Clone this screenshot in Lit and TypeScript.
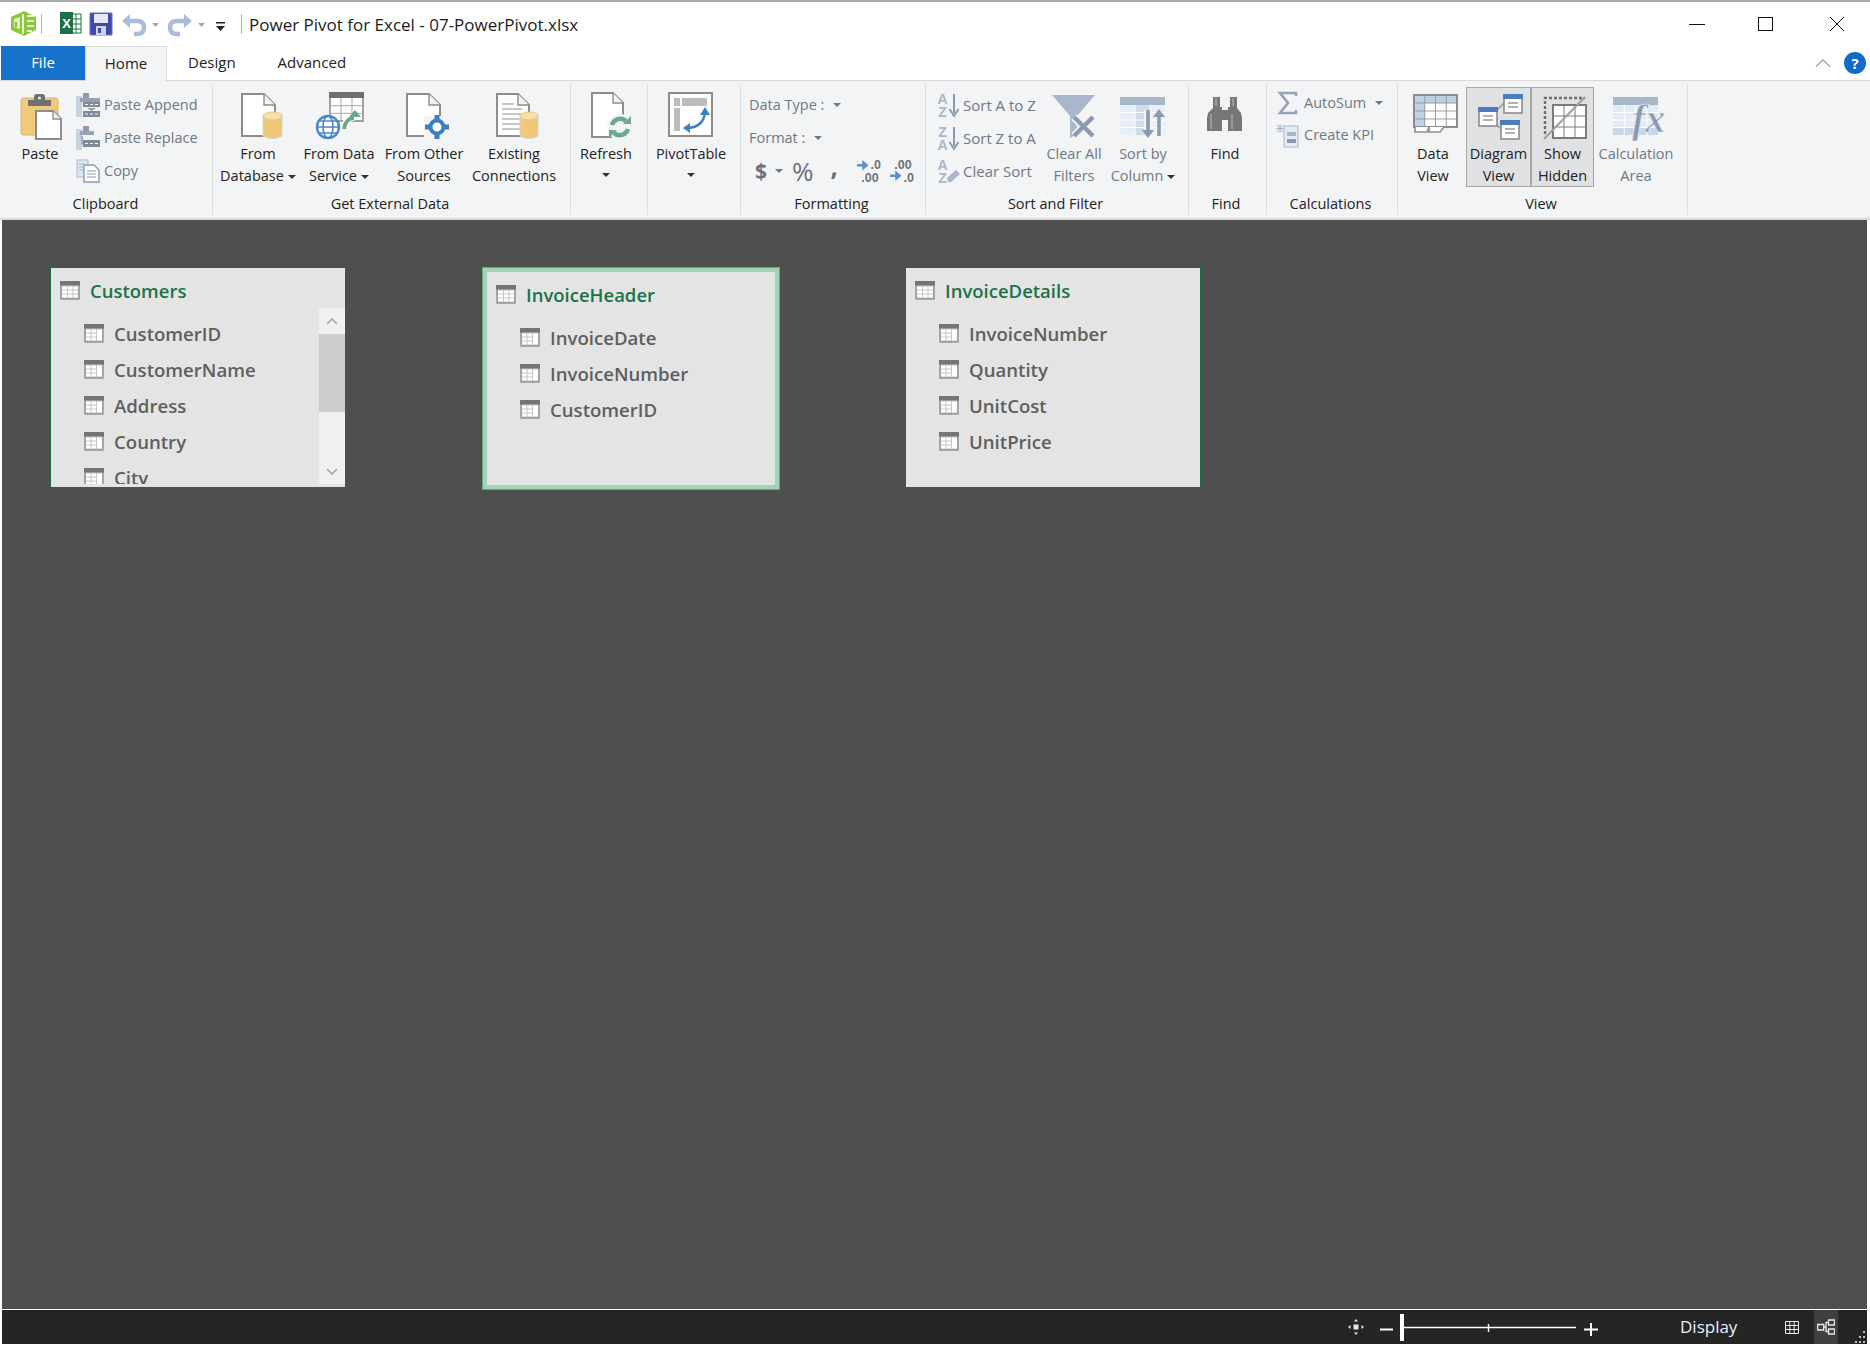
import { LitElement, html, css, svg } from "lit";
import { customElement } from "lit/decorators.js";

const GRAY = "#8d8d8d";
const SOFT = "#a9b7cb";
const SOFT_DARK = "#8b9ab2";

const caret = () => html`<i class="caret"></i>`;
const soloCaret = () => html`<i class="caret solo"></i>`;

// page with a folded corner, the base of most of the big buttons
const doc = (x: number, y: number, w: number, h: number, f = 10) => svg`
  <path d=${`M${x} ${y}H${x + w - f}L${x + w} ${y + f}V${y + h}H${x}Z`} fill="#fff" stroke=${GRAY} stroke-width="2"/>
  <path d=${`M${x + w - f} ${y}V${y + f}H${x + w}`} fill="#f3f3f3" stroke=${GRAY} stroke-width="1.4"/>`;

const cyl = (x: number, y: number, w: number, h: number) => svg`
  <path d=${`M${x} ${y + 3}V${y + h - 3}Q${x + w / 2} ${y + h + 2} ${x + w} ${y + h - 3}V${y + 3}Z`} fill="#efc878" stroke="#d3d3d3"/>
  <ellipse cx=${x + w / 2} cy=${y + 4} rx=${w / 2} ry="4" fill="#f6dfa9" stroke="#e9c77f"/>`;

const grid = (x: number, y: number, w: number, h: number, cols: number, rows: number, line: string) => {
  const out = [];
  for (let i = 1; i < cols; i++) out.push(svg`<path d=${`M${x + (w * i) / cols} ${y}v${h}`} stroke=${line} fill="none"/>`);
  for (let i = 1; i < rows; i++) out.push(svg`<path d=${`M${x} ${y + (h * i) / rows}h${w}`} stroke=${line} fill="none"/>`);
  return out;
};

const big = (body: unknown) => html`<svg class="big" viewBox="0 0 48 52">${body}</svg>`;

const icons: Record<string, unknown> = {
  paste: big(svg`
    <rect x="5" y="8" width="37" height="37" rx="2" fill="#f0c97c" stroke="#ddb668"/>
    <path d="M12 16V10h6V7q0-3 3-3h5q3 0 3 3v3h6v6z" fill="#707070"/>
    <circle cx="23.5" cy="8" r="1.6" fill="#e8e8e8"/>
    ${doc(20, 21, 25, 28, 8)}`),
  database: big(svg`${doc(8, 4, 33, 42, 11)}${cyl(29, 22, 19, 27)}`),
  service: big(svg`
    <rect x="15" y="3" width="33" height="28" fill="#fff" stroke=${GRAY} stroke-width="1.6"/>
    <rect x="14" y="2" width="35" height="6" fill="#6f6f6f"/>
    ${grid(15, 8, 33, 23, 3, 3, "#a6a6a6")}
    <path d="M30 37c1-7 5-10 10-10" fill="none" stroke="#fff" stroke-width="7"/>
    <path d="M29 39c1-7 5-11 10-11" fill="none" stroke="#6aa88c" stroke-width="4"/>
    <path d="M34 27l6-7 6 7z" fill="#6aa88c"/>
    <circle cx="13" cy="37" r="11" fill="#fff" stroke="#4c86c4" stroke-width="2.4"/>
    <ellipse cx="13" cy="37" rx="5" ry="11" fill="none" stroke="#4c86c4" stroke-width="1.6"/>
    <path d="M2 37h22M4 31h18M4 43h18" stroke="#4c86c4" stroke-width="1.6"/>`),
  other: big(svg`
    ${doc(7, 4, 33, 42, 11)}
    <rect x="24" y="26" width="24" height="22" fill="#f3f4f6"/>
    <path d="M37 25v24M25 37h24" stroke="#3f7fc0" stroke-width="5"/>
    <circle cx="37" cy="37" r="6.5" fill="#fff" stroke="#3f7fc0" stroke-width="4"/>`),
  existing: big(svg`
    ${doc(7, 4, 32, 42, 11)}
    <path d="M12 14h12M12 19h20M12 24h20M12 29h20M12 34h20M12 39h20" stroke="#b5b5b5" stroke-width="1.6"/>
    ${cyl(30, 22, 18, 27)}`),
  refresh: html`<svg class="big wide" viewBox="0 0 56 52">
    ${doc(14, 3, 31, 44, 10)}
    <circle cx="42" cy="37" r="13" fill="#f3f4f6"/>
    <path d="M34 35a8.5 8.5 0 0 1 14-4" fill="none" stroke="#6aa98c" stroke-width="4.5"/>
    <path d="M50 39a8.5 8.5 0 0 1-14 4" fill="none" stroke="#6aa98c" stroke-width="4.5"/>
    <path d="M45 34h8v-8zM39 40h-8v8z" fill="#6aa98c"/>
  </svg>`,
  pivot: big(svg`
    <rect x="2" y="3" width="43" height="43" fill="#fff" stroke=${GRAY} stroke-width="2"/>
    <rect x="7" y="8" width="6" height="8" fill="#bcbcbc"/>
    <rect x="15" y="8" width="25" height="8" fill="#bcbcbc"/>
    <rect x="7" y="18" width="6" height="23" fill="#bcbcbc"/>
    <path d="M21 38q15-1 17-15" fill="none" stroke="#3f7fbd" stroke-width="2.4"/>
    <path d="M16 38l7-5v10zM38 17l5 8H33z" fill="#3f7fbd"/>`),
  clearFilters: big(svg`
    <path d="M2 5H45L27 26V44L20 48V26Z" fill=${SOFT}/>
    <path d="M24 27L43 46M43 27L24 46" stroke="#f3f4f6" stroke-width="8"/>
    <path d="M24 27L43 46M43 27L24 46" stroke=${SOFT_DARK} stroke-width="4.4"/>`),
  sortColumn: big(svg`
    <rect x="1" y="7" width="45" height="38" fill="#e8eef6"/>
    <rect x="1" y="7" width="45" height="8" fill=${SOFT}/>
    <rect x="16" y="15" width="15" height="30" fill="#d2dbe7"/>
    ${grid(1, 15, 45, 30, 3, 4, "#fff")}
    <path d="M29 20v22M40 46V24" stroke="#f3f4f6" stroke-width="8"/>
    <path d="M29 20v24M40 46V24" stroke=${SOFT_DARK} stroke-width="3.6"/>
    <path d="M23 40h12l-6 8zM34 27h12l-6-8z" fill=${SOFT_DARK}/>`),
  find: big(svg`
    <path d="M12 7h7v10h2v3h6v-3h2V7h7v11l4 5 1 5v13H27V30h-6v11H6V28l1-5 5-5z" fill="#777"/>
    <path d="M10 24v15M31 24v15M15 8v8M32 8v8" stroke="#a4a4a4" stroke-width="1.6"/>`),
  dataView: big(svg`
    <rect x="5" y="5" width="43" height="32" fill="#fff" stroke=${GRAY} stroke-width="2"/>
    <rect x="6" y="6" width="41" height="7" fill="#bcd0e6"/>
    <rect x="6" y="6" width="10" height="30" fill="#bcd0e6"/>
    ${grid(5, 5, 43, 32, 4, 4, "#9c9c9c")}
    <path d="M6 37v5h12l2-5M20 37v5h11l4-5" fill="#fff" stroke=${GRAY} stroke-width="1.6"/>`),
  diagramView: big(svg`
    <path d="M18 24L30 12M18 32L30 42" stroke="#9a9a9a" stroke-width="1.6"/>
    <rect x="4" y="18" width="18" height="18" fill="#fff" stroke=${GRAY} stroke-width="1.6"/>
    <rect x="3" y="17" width="20" height="5" fill="#4a7ebb"/>
    <path d="M8 26h10M8 30h10" stroke="#999" stroke-width="1.6"/>
    <rect x="29" y="5" width="18" height="18" fill="#fff" stroke=${GRAY} stroke-width="1.6"/>
    <rect x="28" y="4" width="20" height="5" fill="#4a7ebb"/>
    <path d="M33 13h10M33 17h10" stroke="#999" stroke-width="1.6"/>
    <rect x="26" y="31" width="18" height="18" fill="#fff" stroke=${GRAY} stroke-width="1.6"/>
    <rect x="25" y="30" width="20" height="5" fill="#4a7ebb"/>
    <path d="M30 39h10M30 43h10" stroke="#999" stroke-width="1.6"/>`),
  showHidden: big(svg`
    <rect x="14" y="15" width="33" height="33" fill="#fff" stroke="#7b7b7b" stroke-width="2"/>
    ${grid(14, 15, 33, 33, 3, 3, "#7b7b7b")}
    <path d="M6 44V8h40" fill="none" stroke="#6e6e6e" stroke-width="2.4" stroke-dasharray="3 2"/>
    <path d="M5 49L46 7" stroke="#a0a0a0" stroke-width="2"/>`),
  calcArea: big(svg`
    <rect x="1" y="7" width="45" height="38" fill="#e4ebf5"/>
    <rect x="1" y="7" width="45" height="8" fill=${SOFT}/>
    <rect x="1" y="38" width="45" height="7" fill="#c9d6e8"/>
    ${grid(1, 15, 45, 30, 4, 4, "#fff")}
    <text x="20" y="42" class="fx">fx</text>`),

  append: html`<svg class="small" viewBox="0 0 24 24">
    <rect x="0" y="3" width="6" height="21" fill="#c7d2e1"/>
    <rect x="7" y="0" width="6" height="5" fill="#8f9aab"/>
    <rect x="4" y="5" width="20" height="4" fill="#97a3b5"/>
    <rect x="7" y="9" width="17" height="5" fill="#7f8a9b"/>
    <path d="M11 15h9l-4.500 3z" fill="#8f9aab"/>
    <rect x="7" y="18" width="17" height="6" fill="#7f8a9b"/>
    <path d="M9 11.500h13M9 21h13" stroke="#fff" stroke-dasharray="3 2"/>
  </svg>`,
  replace: html`<svg class="small" viewBox="0 0 24 24">
    <rect x="0" y="3" width="6" height="21" fill="#c7d2e1"/>
    <rect x="7" y="0" width="6" height="5" fill="#8f9aab"/>
    <rect x="4" y="5" width="14" height="4" fill="#97a3b5"/>
    <path d="M6 10v8h3" fill="none" stroke="#97a3b5" stroke-width="1.600"/>
    <rect x="7" y="14" width="17" height="7" fill="#7f8a9b"/>
    <path d="M9 17.500h13" stroke="#fff" stroke-dasharray="3 2"/>
  </svg>`,
  copy: html`<svg class="small" viewBox="0 0 24 24">
    <rect x="1" y="1" width="11" height="17" fill="#dfe6ef" stroke=${SOFT}/>
    <path d="M8 6h10l5 5v12H8z" fill="#fff" stroke=${SOFT_DARK} stroke-width="1.400"/>
    <path d="M11 12h9M11 15h9M11 18h9" stroke=${SOFT_DARK}/>
    <path d="M3 5h6M3 8h4M3 11h4" stroke=${SOFT}/>
  </svg>`,
  sortAz: html`<svg class="small" viewBox="0 0 24 24">
    <text x="6.500" y="11" class="az">A</text><text x="6.500" y="24" class="az">Z</text>
    <path d="M18 1v19" stroke=${SOFT_DARK} stroke-width="2"/>
    <path d="M13.500 16l4.500 7 4.500-7" fill="none" stroke=${SOFT_DARK} stroke-width="2"/>
  </svg>`,
  sortZa: html`<svg class="small" viewBox="0 0 24 24">
    <text x="6.500" y="11" class="az">Z</text><text x="6.500" y="24" class="az">A</text>
    <path d="M18 1v19" stroke=${SOFT_DARK} stroke-width="2"/>
    <path d="M13.500 16l4.500 7 4.500-7" fill="none" stroke=${SOFT_DARK} stroke-width="2"/>
  </svg>`,
  clearSort: html`<svg class="small" viewBox="0 0 24 24">
    <text x="6.500" y="11" class="az">A</text><text x="6.500" y="24" class="az">Z</text>
    <path d="M11 19l9-8 4 4-9 8h-3z" fill=${SOFT}/>
  </svg>`,
  sigma: html`<svg class="small" viewBox="0 0 24 24">
    <path d="M20 5V2H4l8 10-8 10h16v-3" fill="none" stroke="#94a4bc" stroke-width="2.600"/>
  </svg>`,
  kpi: html`<svg class="small" viewBox="0 0 24 24">
    <rect x="8" y="3" width="14" height="21" fill="#e5ebf3" stroke=${SOFT}/>
    <rect x="11" y="9" width="9" height="4" fill=${SOFT}/>
    <rect x="11" y="16" width="9" height="4" fill=${SOFT_DARK}/>
    <path d="M4 1v9M0 5.500h8M1 2l6 7M7 2l-6 7" stroke=${SOFT}/>
  </svg>`,
};

const cells = (xs: number[][]) =>
  xs.map(([x, w]) => [5.5, 9.5, 13.5].map((y) => svg`<rect x=${x} y=${y} width=${w} height="3" fill="#fff"/>`));

const iconBase = svg`
  <rect x="1" y="1" width="18" height="17" fill="#c6c6c6" stroke="#8f8f8f" stroke-width="1.400"/>
  <rect x="0" y="0" width="20" height="4.500" fill="#757575"/>`;

const tableIcon = html`<svg class="ticon" viewBox="0 0 20 19">
  ${iconBase}${cells([[2, 5], [8, 4.5], [13.500, 4.5]])}
</svg>`;

const fieldIcon = html`<svg class="ticon" viewBox="0 0 20 19">
  ${iconBase}${cells([[2, 4.5], [7.500, 4.5]])}
  <rect x="13" y="5.500" width="5" height="11" fill="#fff"/>
</svg>`;

const tables = [
  { name: "Customers", x: 48, y: 47, w: 296, h: 221, fields: ["CustomerID", "CustomerName", "Address", "Country", "City"], scroll: true },
  { name: "InvoiceHeader", x: 480, y: 47, w: 298, h: 223, fields: ["InvoiceDate", "InvoiceNumber", "CustomerID"], selected: true },
  { name: "InvoiceDetails", x: 903, y: 47, w: 296, h: 221, fields: ["InvoiceNumber", "Quantity", "UnitCost", "UnitPrice"] },
];

@customElement("app-root")
export class AppRoot extends LitElement {
  private large(icon: string, lines: unknown[], width: number, off = false, active = false) {
    return html`<div class="btn ${off ? "off" : ""} ${active ? "active" : ""}" style="width:${width}px">
      ${icons[icon]}
      <div class="lbl">${lines.map((l) => html`<div>${l}</div>`)}</div>
    </div>`;
  }

  private small(icon: string, label: unknown) {
    return html`<div class="row">${icons[icon]}<span>${label}</span></div>`;
  }

  private group(name: string, cls: string, body: unknown) {
    return html`<section class="group ${cls}">
      <div class="body">${body}</div>
      <div class="glabel">${name}</div>
    </section>`;
  }

  private titlebar() {
    return html`<header class="titlebar">
      <svg class="qat" viewBox="0 2 241 42">
        <path d="M11 17l13-6 12 6v13l-12 6-13-6z" fill="#8cc63f"/>
        <path d="M23 14v20M27 16h7M27 21h7M27 26h7M27 31h5" stroke="#fff" stroke-width="1.600"/>
        <path d="M14 19l6-2v12l-6-2z" fill="#dff0c4"/>
        <path d="M16 22v5" stroke="#6fa52c" stroke-width="1.600"/>
        <rect x="41" y="14" width="1" height="20" fill="#b5b5b5"/>

        <rect x="66" y="14" width="15" height="19" fill="#fff" stroke="#1e7145"/>
        <path d="M71 14v19M76 14v19M66 19h15M66 24h15M66 29h15" stroke="#1e7145"/>
        <rect x="60" y="12" width="13" height="22" fill="#1e7145"/>
        <text x="66.500" y="28" class="xl">X</text>

        <rect x="90" y="13" width="22" height="22" rx="1" fill="#4148a8"/>
        <path d="M90 13h22v22H90z" fill="none" stroke="#6a70c6"/>
        <rect x="94" y="14" width="14" height="9" fill="#e5e8f7"/>
        <rect x="96" y="26" width="10" height="9" fill="#cfd4ef"/>
        <rect x="98" y="28" width="3" height="5" fill="#4148a8"/>

        <path d="M127 21h10q7 0 7 6.500t-7 6.500h-3" fill="none" stroke="#a9bdd6" stroke-width="4.500"/>
        <path d="M122 21l8-7v14z" fill="#a9bdd6"/>
        <path d="M152 23h7l-3.500 4z" fill="#a8a8a8"/>
        <path d="M187 21h-10q-7 0-7 6.500t7 6.500h3" fill="none" stroke="#a9bdd6" stroke-width="4.500"/>
        <path d="M192 21l-8-7v14z" fill="#a9bdd6"/>
        <path d="M198 23h7l-3.500 4z" fill="#a8a8a8"/>
        <rect x="216" y="22" width="9" height="1.500" fill="#222"/>
        <path d="M216 26h9l-4.500 5z" fill="#222"/>
      </svg>
      <i class="tsep"></i>
      <span class="title">Power Pivot for Excel - 07-PowerPivot.xlsx</span>
      <div class="winctl">
        <svg viewBox="0 0 16 16"><path d="M0 8.500h16" stroke="#111"/></svg>
        <svg class="maxi" viewBox="0 0 16 16"><rect x="0.500" y="1.500" width="14" height="13" fill="none" stroke="#111"/></svg>
        <svg viewBox="0 0 16 16"><path d="M1 1l14 14M15 1L1 15" stroke="#111"/></svg>
      </div>
    </header>`;
  }

  private tabs() {
    return html`<nav class="tabs">
      <div class="tab file">File</div>
      <div class="tab home">Home</div>
      <div class="tab design">Design</div>
      <div class="tab">Advanced</div>
      <div class="tabtools">
        <svg class="collapse" viewBox="0 0 16 8"><path d="M1 7.500l7-6.500 7 6.500" fill="none" stroke="#a8a8a8" stroke-width="1.500"/></svg>
        <div class="help">?</div>
      </div>
    </nav>`;
  }

  private ribbon() {
    return html`<div class="ribbon">
      ${this.group("Clipboard", "g-clip", html`
        ${this.large("paste", ["Paste"], 72)}
        <div class="col off">
          ${this.small("append", "Paste Append")}
          ${this.small("replace", "Paste Replace")}
          ${this.small("copy", "Copy")}
        </div>`)}
      ${this.group("Get External Data", "g-ext", html`
        ${this.large("database", ["From", html`Database${caret()}`], 80)}
        ${this.large("service", ["From Data", html`Service${caret()}`], 82)}
        ${this.large("other", ["From Other", "Sources"], 88)}
        ${this.large("existing", ["Existing", "Connections"], 92)}`)}
      ${this.group("", "g-refresh", this.large("refresh", ["Refresh", soloCaret()], 70))}
      ${this.group("", "g-pivot", this.large("pivot", ["PivotTable", soloCaret()], 86))}
      ${this.group("Formatting", "g-fmt", html`
        <div class="col off">
          <div class="row"><span>Data Type :</span><i class="caret c-type"></i></div>
          <div class="row"><span>Format :</span><i class="caret c-type"></i></div>
          <div class="row numfmt">
            <b class="dollar">$</b><i class="caret c-dollar"></i>
            <span class="pct">%</span>
            <b class="comma">,</b>
            <svg class="dec" viewBox="0 0 24 22">
              <path d="M1 6h6" stroke="#5f8fc4" stroke-width="2.400"/><path d="M6 1l6 5-6 5z" fill="#5f8fc4"/>
              <text x="14" y="10" class="dectxt">.0</text><text x="5" y="22" class="dectxt">.00</text>
            </svg>
            <svg class="dec" viewBox="0 0 24 22">
              <text x="5" y="10" class="dectxt">.00</text>
              <path d="M1 16h6" stroke="#5f8fc4" stroke-width="2.400"/><path d="M6 11l6 5-6 5z" fill="#5f8fc4"/>
              <text x="14" y="22" class="dectxt">.0</text>
            </svg>
          </div>
        </div>`)}
      ${this.group("Sort and Filter", "g-sort", html`
        <div class="col off sortcol">
          ${this.small("sortAz", "Sort A to Z")}
          ${this.small("sortZa", "Sort Z to A")}
          ${this.small("clearSort", "Clear Sort")}
        </div>
        ${this.large("clearFilters", ["Clear All", "Filters"], 64, true)}
        ${this.large("sortColumn", ["Sort by", html`Column${caret()}`], 74, true)}`)}
      ${this.group("Find", "g-find", this.large("find", ["Find"], 72))}
      ${this.group("Calculations", "g-calc", html`
        <div class="col off calccol">
          <div class="row">${icons.sigma}<span>AutoSum</span><i class="caret"></i></div>
          ${this.small("kpi", "Create KPI")}
        </div>`)}
      ${this.group("View", "g-view", html`
        ${this.large("dataView", ["Data", "View"], 66)}
        ${this.large("diagramView", ["Diagram", "View"], 65, false, true)}
        ${this.large("showHidden", ["Show", "Hidden"], 63, false, true)}
        ${this.large("calcArea", ["Calculation", "Area"], 84, true)}`)}
    </div>`;
  }

  private canvas() {
    return html`<main class="canvas">
      ${tables.map((t) => html`
        <article class="card ${t.selected ? "selected" : ""}" style="left:${t.x}px;top:${t.y}px;width:${t.w}px;height:${t.h}px">
          <div class="chead">${tableIcon}<span>${t.name}</span></div>
          <div class="fields">
            ${t.fields.map((f) => html`<div class="field">${fieldIcon}<span>${f}</span></div>`)}
          </div>
          ${t.scroll
            ? html`<div class="scroll">
                <div class="sbtn"><svg viewBox="0 0 12 7"><path d="M1 6l5-5 5 5" fill="none" stroke="#a6a6a6" stroke-width="1.600"/></svg></div>
                <div class="thumb"></div>
                <div class="track"></div>
                <div class="sbtn"><svg viewBox="0 0 12 7"><path d="M1 1l5 5 5-5" fill="none" stroke="#a6a6a6" stroke-width="1.600"/></svg></div>
              </div>`
            : null}
        </article>`)}
    </main>`;
  }

  private statusbar() {
    return html`<footer class="status">
      <svg class="fit" viewBox="0 0 16 16" fill="#e8e8e8">
        <rect x="5.500" y="5.500" width="5" height="5"/>
        <path d="M8 0l2 2.500H6zM8 16l2-2.500H6zM0 8l2.500-2v4zM16 8l-2.500-2v4z"/>
      </svg>
      <svg class="slider" viewBox="0 0 220 30">
        <path d="M0 17.500h13M204 17.500h14M211 11v13" stroke="#fff" stroke-width="2"/>
        <rect x="20" y="2" width="4" height="27" fill="#fff"/>
        <path d="M24 15.500h172" stroke="#fff" stroke-width="1.400"/>
        <path d="M108.500 12v8" stroke="#fff" stroke-width="1.400"/>
      </svg>
      <span class="display">Display</span>
      <svg class="gridview" viewBox="0 0 14 13"><path d="M.5.500h13v12H.500zM.500 4.500h13M.500 8.500h13M4.800.500v12M9.200.500v12" fill="none" stroke="#e8e8e8"/></svg>
      <div class="diagramview">
        <svg viewBox="0 0 18 16" fill="none" stroke="#e8e8e8" stroke-width="1.300">
          <path d="M.7 5.500h6v5.500h-6zM11.500 1h6v5h-6zM11.500 10h6v5h-6zM6.700 8H9V3.500h2.500M9 8v4.500h2.500"/>
        </svg>
      </div>
      <svg class="grip" viewBox="0 0 12 12" fill="#bdbdbd">
        <rect x="9" y="0" width="2" height="2"/><rect x="5" y="5" width="2" height="2"/><rect x="9" y="5" width="2" height="2"/>
        <rect x="1" y="10" width="2" height="2"/><rect x="5" y="10" width="2" height="2"/><rect x="9" y="10" width="2" height="2"/>
      </svg>
    </footer>`;
  }

  override render() {
    return html`${this.titlebar()}${this.tabs()}${this.ribbon()}${this.canvas()}${this.statusbar()}`;
  }

  static styles = css`
    :host {
      display: flex;
      flex-direction: column;
      width: 1870px;
      height: 1346px;
      background: #fff;
      font-family: "Open Sans", sans-serif;
      font-size: 14.5px;
      color: #222;
      overflow: hidden;
    }

    .titlebar {
      display: flex;
      align-items: center;
      flex: none;
      height: 44px;
      border-top: 2px solid #ababab;
      background: #fff;
    }
    .qat {
      width: 241px;
      height: 42px;
      flex: none;
      margin-bottom: 2px;
    }
    .xl {
      font: 700 13px "Liberation Sans", sans-serif;
      fill: #fff;
      text-anchor: middle;
    }
    .tsep {
      width: 1px;
      height: 20px;
      background: #b5b5b5;
      margin-right: 7px;
    }
    .title {
      font-size: 17px;
      color: #1c1c1c;
    }
    .winctl {
      margin-left: auto;
      display: flex;
      gap: 54px;
      padding-right: 25px;
    }
    .winctl svg {
      width: 16px;
      height: 16px;
    }
    .winctl .maxi {
      margin: 0 1px 0 -1px;
    }

    .tabs {
      display: flex;
      flex: none;
      height: 34px;
      align-items: stretch;
      padding-left: 1px;
      border-bottom: 1px solid #d8d8d8;
      line-height: 33px;
      font-size: 15px;
    }
    .tab {
      padding: 0 21px;
    }
    .file {
      width: 84px;
      box-sizing: border-box;
      padding: 0;
      text-align: center;
      background: #1772c9;
      color: #fff;
    }
    .home {
      width: 82px;
      box-sizing: border-box;
      padding: 0;
      text-align: center;
      background: #f3f4f6;
      border: 1px solid #d8d8d8;
      border-bottom: none;
      height: 35px;
    }
    .tabtools {
      margin-left: auto;
      display: flex;
      align-items: center;
      gap: 13px;
      padding-right: 4px;
    }
    .collapse {
      width: 16px;
      height: 8px;
    }
    .help {
      width: 22px;
      height: 22px;
      border-radius: 50%;
      background: #0f6cc9;
      color: #fff;
      font-weight: 700;
      font-size: 15px;
      line-height: 22px;
      text-align: center;
    }

    .ribbon {
      display: flex;
      flex: none;
      height: 137px;
      padding-left: 2px;
      background: #f3f4f6;
      border-bottom: 2px solid #d9d9d9;
      line-height: 22px;
    }
    .group {
      display: flex;
      flex-direction: column;
      box-sizing: border-box;
      height: 131px;
      margin-top: 3px;
      border-right: 1px solid #dcdee0;
    }
    .body {
      display: flex;
      height: 109px;
    }
    .glabel {
      height: 22px;
      text-align: center;
      padding-right: 3px;
    }
    .g-clip { width: 211px; }
    .g-clip .body { padding-left: 2px; }
    .g-ext { width: 358px; }
    .g-ext .body { padding-left: 5px; }
    .g-refresh { width: 77px; }
    .g-pivot { width: 93px; }
    .g-fmt { width: 185px; }
    .g-fmt .body { padding-left: 8px; }
    .g-sort { width: 263px; }
    .g-sort .body { padding-left: 10px; }
    .g-find { width: 78px; }
    .g-calc { width: 131px; }
    .g-calc .body { padding-left: 9px; }
    .g-view { width: 290px; }
    .g-view .body { padding-left: 2px; }

    .btn {
      box-sizing: border-box;
      flex: none;
      height: 103px;
      padding-top: 6px;
      display: flex;
      flex-direction: column;
      align-items: center;
    }
    .btn.off,
    .col.off {
      color: #6f7885;
    }
    .btn.active {
      height: 100px;
      margin-top: 3px;
      padding-top: 2px;
      border: 1px solid #a8a8a8;
      background: #e0e1e2;
    }
    .big {
      width: 48px;
      height: 52px;
      flex: none;
      display: block;
      overflow: visible;
    }
    .big.wide {
      width: 56px;
    }
    .lbl {
      margin-top: 1px;
      text-align: center;
      white-space: nowrap;
    }
    .caret {
      display: inline-block;
      vertical-align: middle;
      width: 0;
      height: 0;
      margin-left: 4px;
      border: 4px solid transparent;
      border-top: 4px solid #333;
      border-bottom: none;
    }
    .caret.solo {
      margin-left: 0;
      transform: translateY(-2px);
    }
    .col {
      display: flex;
      flex-direction: column;
      padding-top: 4px;
      white-space: nowrap;
    }
    .row {
      display: flex;
      align-items: center;
      gap: 4px;
      height: 33px;
    }
    .row .caret {
      border-top-color: #6f7885;
      margin-left: 5px;
    }
    .small {
      width: 24px;
      height: 24px;
      flex: none;
      overflow: visible;
    }
    .sortcol {
      width: 106px;
      font-size: 15px;
    }
    .sortcol .row {
      gap: 3px;
    }
    .calccol {
      padding-top: 3px;
    }
    .calccol .row {
      height: 32px;
    }
    .az {
      font: 700 14px "Liberation Sans", sans-serif;
      fill: #a9b7cb;
      text-anchor: middle;
    }
    .fx {
      font: italic 700 40px "Liberation Serif", serif;
      fill: #8b9ab2;
      stroke: #f3f4f6;
      stroke-width: 0.6px;
    }
    .numfmt {
      padding-left: 6px;
      gap: 0;
    }
    .dollar {
      font-size: 21px;
      color: #6a727d;
    }
    .row .c-dollar {
      margin-left: 8px;
    }
    .pct {
      font-size: 26px;
      color: #6a727d;
      margin-left: 9px;
    }
    .comma {
      font-size: 26px;
      color: #6a727d;
      margin: 0 18px 10px 17px;
    }
    .dec {
      width: 25px;
      height: 23px;
      margin-right: 8px;
      flex: none;
      overflow: visible;
    }
    .dectxt {
      font: 700 12px "Liberation Sans", sans-serif;
      fill: #6a727d;
    }

    .canvas {
      position: relative;
      flex: none;
      height: 1089px;
      margin: 0 3px 0 2px;
      background: #4f4f4f;
      border-bottom: 1px solid #fff;
    }
    .card {
      position: absolute;
      display: flex;
      flex-direction: column;
      box-sizing: border-box;
      border: 1px solid #157040;
      background: #e4e4e4;
      padding-bottom: 3px;
    }
    .card.selected {
      border: 5px solid #9fd5b5;
      padding: 0 0 3px 0;
      outline: 1px solid #6fa287;
      outline-offset: -1px;
    }
    .chead {
      display: flex;
      align-items: center;
      gap: 10px;
      flex: none;
      box-sizing: border-box;
      height: 45px;
      padding: 0 0 1px 9px;
      color: #1c7347;
      font-size: 18.5px;
      font-weight: 600;
    }
    .ticon {
      width: 20px;
      height: 19px;
      flex: none;
    }
    .fields {
      flex: 1;
      min-height: 0;
      overflow: hidden;
      padding-top: 2px;
      color: #5f5f5f;
      font-size: 18.6px;
      font-weight: 600;
    }
    .field {
      display: flex;
      align-items: center;
      gap: 10px;
      height: 36px;
      padding-left: 33px;
    }
    .scroll {
      position: absolute;
      right: 0;
      top: 40px;
      bottom: 3px;
      width: 26px;
      display: flex;
      flex-direction: column;
      background: #f0f0f0;
    }
    .sbtn {
      flex: none;
      height: 26px;
      display: flex;
      align-items: center;
      justify-content: center;
    }
    .sbtn svg {
      width: 12px;
      height: 7px;
    }
    .thumb {
      flex: none;
      height: 78px;
      background: #cdcdcd;
    }
    .track {
      flex: 1;
    }

    .status {
      display: flex;
      align-items: center;
      flex: none;
      height: 34px;
      margin: 0 3px 2px 2px;
      background: #252525;
      color: #fff;
    }
    .fit {
      width: 16px;
      height: 16px;
      margin-left: 1346px;
    }
    .slider {
      width: 220px;
      height: 30px;
      margin-left: 16px;
    }
    .display {
      margin-left: 80px;
      padding-bottom: 2px;
      font-size: 17px;
      color: #e6f1fb;
    }
    .gridview {
      width: 14px;
      height: 13px;
      margin-left: 48px;
    }
    .diagramview {
      display: flex;
      align-items: center;
      justify-content: center;
      width: 24px;
      height: 34px;
      margin-left: 15px;
      background: #3f3f3f;
    }
    .diagramview svg {
      width: 18px;
      height: 16px;
    }
    .grip {
      width: 12px;
      height: 12px;
      margin: 20px 0 0 16px;
    }
  `;
}
